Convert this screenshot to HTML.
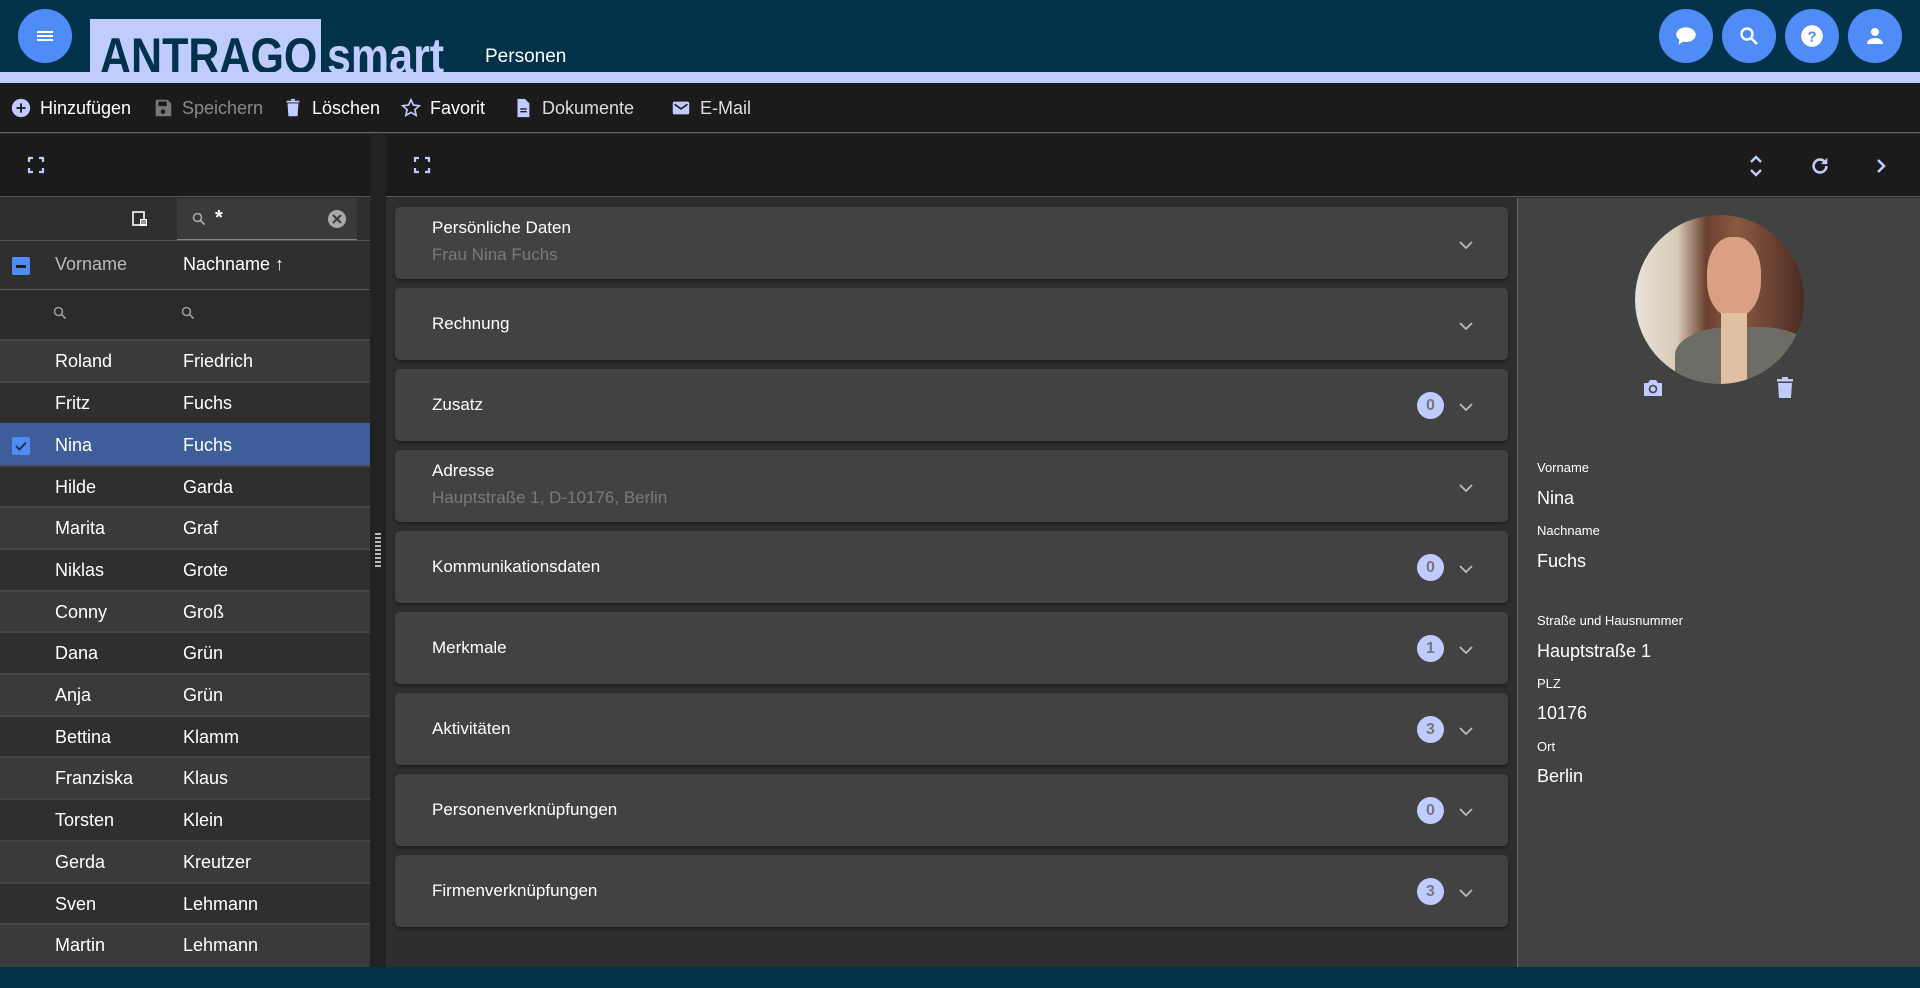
<!DOCTYPE html>
<html><head><meta charset="utf-8">
<style>
*{margin:0;padding:0;box-sizing:border-box}
body{width:1920px;height:988px;overflow:hidden;background:#2e2e2e;font-family:"Liberation Sans",sans-serif;color:#fff;position:relative}
.abs{position:absolute}
.hdr{left:0;top:0;width:1920px;height:72px;background:#00324a}
.band{left:0;top:72px;width:1920px;height:11px;background:#c0ccff}
.circ{width:54px;height:54px;border-radius:50%;background:#4f8cf7;display:flex;align-items:center;justify-content:center}
.tb{left:0;top:83px;width:1920px;height:50px;background:#1b1b1b;border-bottom:1px solid #666}
.tbi{position:absolute;top:0;height:50px;display:flex;align-items:center;font-size:18px;color:#fff}
.tbi svg{margin-right:8px}
.ph{top:134px;height:63px;background:#1b1b1b;border-bottom:1px solid #555}
.row{position:absolute;left:0;width:370px;height:42px;font-size:18px;border-top:2px solid #464646}
.row span{position:absolute;top:10px}
.card{position:absolute;left:395px;width:1113px;height:72px;background:#424242;border-radius:5px;box-shadow:0 2px 3px rgba(0,0,0,.35)}
.card .t{position:absolute;left:37px;font-size:17px;color:#fff}
.card .s{position:absolute;left:37px;top:38px;font-size:17px;color:#7a7a7a}
.badge{position:absolute;left:1022px;top:23px;width:27px;height:27px;border-radius:50%;background:#c0ccff;color:#777;font-weight:bold;font-size:16px;text-align:center;line-height:27px}
.chev{position:absolute;left:1063px;top:32px}
.lbl{position:absolute;left:1537px;font-size:13px;color:#fff}
.val{position:absolute;left:1537px;font-size:18px;color:#fff}
</style></head><body>
<div class="abs hdr"></div>
<div class="abs band"></div>
<div class="abs circ" style="left:18px;top:9px"><svg width="24" height="24" viewBox="0 0 24 24"><path d="M4 7h16v2H4zM4 11h16v2H4zM4 15h16v2H4z" fill="#fff"/></svg></div>
<div class="abs" style="left:90px;top:19px;width:231px;height:53px;background:#c0ccff"></div>
<div class="abs" style="left:0;top:0;width:600px;height:72px;overflow:hidden">
<div class="abs" style="left:100px;top:31px;font-size:50px;line-height:50px;font-weight:bold;color:#00324a;transform:scaleX(.86);transform-origin:left">ANTRAGO</div>
<div class="abs" style="left:327px;top:31px;font-size:50px;line-height:50px;font-weight:bold;color:#c0ccff;transform:scaleX(.86);transform-origin:left">smart</div>
</div>
<div class="abs" style="left:485px;top:46px;font-size:19px;color:#fff">Personen</div>
<div class="abs circ" style="left:1659px;top:9px"><svg width="26" height="26" viewBox="0 0 24 24"><path d="M12 4C6.5 4 3 7 3 10.5c0 2 1.2 3.8 3 5L5 20l4.5-2.8c.8.2 1.6.3 2.5.3 5.5 0 9-3 9-6.5S17.5 4 12 4z" fill="#fff"/></svg></div>
<div class="abs circ" style="left:1722px;top:9px"><svg width="24" height="24" viewBox="0 0 24 24"><circle cx="10" cy="10" r="5.5" stroke="#fff" stroke-width="2.4" fill="none"/><path d="M14 14l6 6" stroke="#fff" stroke-width="2.6"/></svg></div>
<div class="abs circ" style="left:1785px;top:9px"><svg width="26" height="26" viewBox="0 0 24 24"><circle cx="12" cy="12" r="10" fill="#fff"/><text x="12" y="17" text-anchor="middle" font-size="14" font-weight="bold" fill="#4f8cf7" font-family="Liberation Sans">?</text></svg></div>
<div class="abs circ" style="left:1848px;top:9px"><svg width="24" height="24" viewBox="0 0 24 24"><circle cx="12" cy="8" r="4" fill="#fff"/><path d="M4 20c0-4 4-6 8-6s8 2 8 6z" fill="#fff"/></svg></div>

<div class="abs tb">
<div class="tbi" style="left:10px"><svg width="22" height="22" viewBox="0 0 24 24"><circle cx="12" cy="12" r="10" fill="#c0ccff"/><path d="M12 7v10M7 12h10" stroke="#1b1b1b" stroke-width="2"/></svg>Hinzufügen</div>
<div class="tbi" style="left:152px;color:#8a8a8a"><svg width="22" height="22" viewBox="0 0 24 24"><path d="M4 3h13l4 4v14H4z" fill="#777"/><rect x="7" y="5" width="9" height="5" fill="#1b1b1b"/><circle cx="12" cy="16" r="2.5" fill="#1b1b1b"/></svg>Speichern</div>
<div class="tbi" style="left:282px"><svg width="22" height="22" viewBox="0 0 24 24"><path d="M6 7h12l-1 14H7z" fill="#c0ccff"/><rect x="5" y="4" width="14" height="2" fill="#c0ccff"/><rect x="10" y="2" width="4" height="2" fill="#c0ccff"/></svg>Löschen</div>
<div class="tbi" style="left:400px"><svg width="22" height="22" viewBox="0 0 24 24"><path d="M12 3l2.7 5.8 6.3.7-4.7 4.3 1.3 6.2L12 16.8 6.4 20l1.3-6.2L3 9.5l6.3-.7z" fill="none" stroke="#c0ccff" stroke-width="1.8"/></svg>Favorit</div>
<div class="tbi" style="left:512px;color:#ddd"><svg width="22" height="22" viewBox="0 0 24 24"><path d="M6 2h8l5 5v15H6z" fill="#c0ccff"/><path d="M9 13h7M9 16h7" stroke="#1b1b1b" stroke-width="1.5"/></svg>Dokumente</div>
<div class="tbi" style="left:670px;color:#ddd"><svg width="22" height="22" viewBox="0 0 24 24"><rect x="3" y="5" width="18" height="14" rx="2" fill="#c0ccff"/><path d="M5 8l7 5 7-5" stroke="#1b1b1b" stroke-width="1.8" fill="none"/></svg>E-Mail</div>
</div>

<div class="abs ph" style="left:0;width:370px"><svg class="abs" style="left:27px;top:22px" width="18" height="18" viewBox="0 0 18 18"><path d="M2 6V2h4M12 2h4v4M16 12v4h-4M6 16H2v-4" stroke="#c0ccff" stroke-width="2.2" fill="none"/></svg></div>
<div class="abs" style="left:0;top:198px;width:370px;height:43px;background:#2f2f2f;border-bottom:1px solid #555"></div>
<svg class="abs" style="left:131px;top:210px" width="18" height="18" viewBox="0 0 18 18"><rect x="2" y="2" width="11" height="13" fill="none" stroke="#fff" stroke-width="1.6"/><rect x="9" y="9" width="7" height="7" fill="#fff"/><path d="M10 11h5M10 13h5" stroke="#2f2f2f"/></svg>
<div class="abs" style="left:177px;top:198px;width:180px;height:42px;background:#3a3a3a;border-bottom:1px solid #888"></div>
<svg class="abs" style="left:191px;top:211px" width="16" height="16" viewBox="0 0 16 16"><circle cx="6.5" cy="6.5" r="4" stroke="#aaa" stroke-width="1.6" fill="none"/><path d="M9.5 9.5l4 4" stroke="#aaa" stroke-width="1.8"/></svg>
<div class="abs" style="left:215px;top:207px;font-size:20px;font-weight:bold">*</div>
<svg class="abs" style="left:327px;top:209px" width="20" height="20" viewBox="0 0 20 20"><circle cx="10" cy="10" r="9" fill="#aaa"/><path d="M6 6l8 8M14 6l-8 8" stroke="#3a3a3a" stroke-width="2"/></svg>
<div class="abs" style="left:0;top:242px;width:370px;height:48px;background:#2f2f2f;border-bottom:1px solid #555"></div>
<div class="abs" style="left:12px;top:257px;width:18px;height:18px;background:#4f8cf7;border-radius:2px"><div style="margin:8px 4px;height:2.5px;background:#1b1b1b"></div></div>
<div class="abs" style="left:55px;top:254px;font-size:18px;color:#bbb">Vorname</div>
<div class="abs" style="left:183px;top:254px;font-size:18px;color:#fff">Nachname ↑</div>
<div class="abs" style="left:0;top:291px;width:370px;height:49px;background:#2a2a2a"></div>
<svg class="abs" style="left:52px;top:305px" width="16" height="16" viewBox="0 0 16 16"><circle cx="6.5" cy="6.5" r="4" stroke="#999" stroke-width="1.6" fill="none"/><path d="M9.5 9.5l4 4" stroke="#999" stroke-width="1.8"/></svg>
<svg class="abs" style="left:180px;top:305px" width="16" height="16" viewBox="0 0 16 16"><circle cx="6.5" cy="6.5" r="4" stroke="#999" stroke-width="1.6" fill="none"/><path d="M9.5 9.5l4 4" stroke="#999" stroke-width="1.8"/></svg>

<div class="row" style="top:339px;background:#3a3a3a"><span style="left:55px">Roland</span><span style="left:183px">Friedrich</span></div>
<div class="row" style="top:381px;background:#2f2f2f"><span style="left:55px">Fritz</span><span style="left:183px">Fuchs</span></div>
<div class="row" style="top:423px;background:#3e5e9a;border-top-color:#3e5e9a"><div class="abs" style="left:12px;top:12px;width:18px;height:18px;background:#4f8cf7;border-radius:2px"><svg width="18" height="18" viewBox="0 0 18 18"><path d="M4 9l3.5 3.5L14 5.5" stroke="#1b2a4a" stroke-width="1.8" fill="none"/></svg></div><span style="left:55px">Nina</span><span style="left:183px">Fuchs</span></div>
<div class="row" style="top:465px;background:#2f2f2f"><span style="left:55px">Hilde</span><span style="left:183px">Garda</span></div>
<div class="row" style="top:506px;background:#3a3a3a"><span style="left:55px">Marita</span><span style="left:183px">Graf</span></div>
<div class="row" style="top:548px;background:#2f2f2f"><span style="left:55px">Niklas</span><span style="left:183px">Grote</span></div>
<div class="row" style="top:590px;background:#3a3a3a"><span style="left:55px">Conny</span><span style="left:183px">Groß</span></div>
<div class="row" style="top:631px;background:#2f2f2f"><span style="left:55px">Dana</span><span style="left:183px">Grün</span></div>
<div class="row" style="top:673px;background:#3a3a3a"><span style="left:55px">Anja</span><span style="left:183px">Grün</span></div>
<div class="row" style="top:715px;background:#2f2f2f"><span style="left:55px">Bettina</span><span style="left:183px">Klamm</span></div>
<div class="row" style="top:756px;background:#3a3a3a"><span style="left:55px">Franziska</span><span style="left:183px">Klaus</span></div>
<div class="row" style="top:798px;background:#2f2f2f"><span style="left:55px">Torsten</span><span style="left:183px">Klein</span></div>
<div class="row" style="top:840px;background:#3a3a3a"><span style="left:55px">Gerda</span><span style="left:183px">Kreutzer</span></div>
<div class="row" style="top:882px;background:#2f2f2f"><span style="left:55px">Sven</span><span style="left:183px">Lehmann</span></div>
<div class="row" style="top:923px;background:#3a3a3a;height:44px"><span style="left:55px">Martin</span><span style="left:183px">Lehmann</span></div>

<div class="abs" style="left:370px;top:134px;width:16px;height:833px;background:#222"></div>
<div class="abs" style="left:375px;top:533px;width:6px;height:34px;background:repeating-linear-gradient(#bbb 0 2px,transparent 2px 4px)"></div>

<div class="abs ph" style="left:386px;width:1534px"><svg class="abs" style="left:27px;top:22px" width="18" height="18" viewBox="0 0 18 18"><path d="M2 6V2h4M12 2h4v4M16 12v4h-4M6 16H2v-4" stroke="#c0ccff" stroke-width="2.2" fill="none"/></svg>
<svg class="abs" style="left:1362px;top:20px" width="16" height="24" viewBox="0 0 16 24"><path d="M3 8l5-5 5 5M3 16l5 5 5-5" stroke="#c0ccff" stroke-width="2.4" fill="none"/></svg>
<svg class="abs" style="left:1423px;top:21px" width="22" height="22" viewBox="0 0 24 24"><path d="M19 12a7 7 0 1 1-2.1-5" stroke="#c0ccff" stroke-width="2.8" fill="none"/><path d="M20 3v7h-7z" fill="#c0ccff"/></svg>
<svg class="abs" style="left:1488px;top:23px" width="14" height="18" viewBox="0 0 14 18"><path d="M4 3l6 6-6 6" stroke="#c0ccff" stroke-width="2.6" fill="none"/></svg>
</div>
<div class="abs" style="left:386px;top:198px;width:1131px;height:769px;background:#2e2e2e"></div>

<div class="card" style="top:207px"><div class="t" style="top:11px">Persönliche Daten</div><div class="s">Frau Nina Fuchs</div><svg class="chev" width="16" height="12" viewBox="0 0 16 12"><path d="M2 3l6 6 6-6" stroke="#bbb" stroke-width="1.8" fill="none"/></svg></div>
<div class="card" style="top:288px"><div class="t" style="top:26px">Rechnung</div><svg class="chev" width="16" height="12" viewBox="0 0 16 12"><path d="M2 3l6 6 6-6" stroke="#bbb" stroke-width="1.8" fill="none"/></svg></div>
<div class="card" style="top:369px"><div class="t" style="top:26px">Zusatz</div><div class="badge">0</div><svg class="chev" width="16" height="12" viewBox="0 0 16 12"><path d="M2 3l6 6 6-6" stroke="#bbb" stroke-width="1.8" fill="none"/></svg></div>
<div class="card" style="top:450px"><div class="t" style="top:11px">Adresse</div><div class="s">Hauptstraße 1, D-10176, Berlin</div><svg class="chev" width="16" height="12" viewBox="0 0 16 12"><path d="M2 3l6 6 6-6" stroke="#bbb" stroke-width="1.8" fill="none"/></svg></div>
<div class="card" style="top:531px"><div class="t" style="top:26px">Kommunikationsdaten</div><div class="badge">0</div><svg class="chev" width="16" height="12" viewBox="0 0 16 12"><path d="M2 3l6 6 6-6" stroke="#bbb" stroke-width="1.8" fill="none"/></svg></div>
<div class="card" style="top:612px"><div class="t" style="top:26px">Merkmale</div><div class="badge">1</div><svg class="chev" width="16" height="12" viewBox="0 0 16 12"><path d="M2 3l6 6 6-6" stroke="#bbb" stroke-width="1.8" fill="none"/></svg></div>
<div class="card" style="top:693px"><div class="t" style="top:26px">Aktivitäten</div><div class="badge">3</div><svg class="chev" width="16" height="12" viewBox="0 0 16 12"><path d="M2 3l6 6 6-6" stroke="#bbb" stroke-width="1.8" fill="none"/></svg></div>
<div class="card" style="top:774px"><div class="t" style="top:26px">Personenverknüpfungen</div><div class="badge">0</div><svg class="chev" width="16" height="12" viewBox="0 0 16 12"><path d="M2 3l6 6 6-6" stroke="#bbb" stroke-width="1.8" fill="none"/></svg></div>
<div class="card" style="top:855px"><div class="t" style="top:26px">Firmenverknüpfungen</div><div class="badge">3</div><svg class="chev" width="16" height="12" viewBox="0 0 16 12"><path d="M2 3l6 6 6-6" stroke="#bbb" stroke-width="1.8" fill="none"/></svg></div>

<div class="abs" style="left:1517px;top:198px;width:403px;height:769px;background:#424242;border-left:1px solid #666"></div>
<div class="abs" style="left:1635px;top:215px;width:169px;height:169px;border-radius:50%;overflow:hidden;background:linear-gradient(90deg,#e8e2d8 0%,#d8cbb8 25%,#6b4030 42%,#8a5a40 60%,#6a4030 82%,#4a2c20 100%)">
<div style="position:absolute;left:72px;top:22px;width:54px;height:80px;border-radius:45%;background:#d9a084"></div>
<div style="position:absolute;left:40px;top:112px;width:140px;height:70px;border-radius:40% 40% 0 0;background:#6d6d66"></div>
<div style="position:absolute;left:86px;top:98px;width:26px;height:75px;background:#e0c0a0"></div>
</div>
<svg class="abs" style="left:1641px;top:376px" width="24" height="24" viewBox="0 0 24 24"><path d="M3 7h4l2-3h6l2 3h4v13H3z" fill="#c0ccff"/><circle cx="12" cy="13" r="3.5" fill="none" stroke="#424242" stroke-width="1.6"/></svg>
<svg class="abs" style="left:1774px;top:376px" width="22" height="24" viewBox="0 0 22 24"><path d="M4 7h14l-1 15H5z" fill="#c0ccff"/><rect x="3" y="3" width="16" height="2.5" fill="#c0ccff"/><rect x="8" y="1" width="6" height="2" fill="#c0ccff"/></svg>
<div class="lbl" style="top:460px">Vorname</div>
<div class="val" style="top:488px">Nina</div>
<div class="lbl" style="top:523px">Nachname</div>
<div class="val" style="top:551px">Fuchs</div>
<div class="lbl" style="top:613px">Straße und Hausnummer</div>
<div class="val" style="top:641px">Hauptstraße 1</div>
<div class="lbl" style="top:676px">PLZ</div>
<div class="val" style="top:703px">10176</div>
<div class="lbl" style="top:739px">Ort</div>
<div class="val" style="top:766px">Berlin</div>

<div class="abs" style="left:0;top:967px;width:1920px;height:21px;background:#00324a"></div>
</body></html>
